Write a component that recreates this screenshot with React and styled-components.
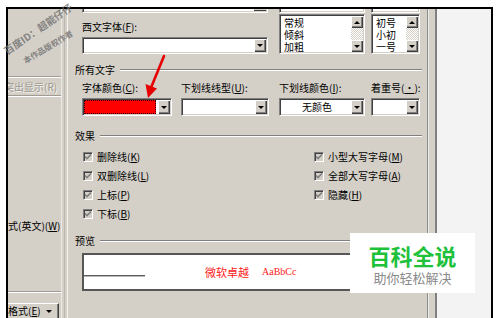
import React from 'react';
import styled, { createGlobalStyle } from 'styled-components';

const FONT = `"Noto Sans CJK SC", "Noto Sans", "Liberation Sans", sans-serif`;

const GlobalStyle = createGlobalStyle`
  html, body { margin: 0; padding: 0; background: #ffffff; }
  body { font-family: ${FONT}; }
  * { box-sizing: border-box; }
`;

const Page = styled.div`
  position: relative;
  width: 500px;
  height: 318px;
  overflow: hidden;
  background: #fff;
  padding: 7px 7px 0 6px;
  font-family: ${FONT};
  font-size: 10px;
  line-height: 12px;
  color: #000;
`;

const Frame = styled.div`
  display: flex;
  height: 100%;
  border: 2px solid #000;
  border-bottom: none;
  background: #d4d0c8;
`;

/* ---------- left background window ---------- */
const LeftPanel = styled.div`
  width: 53px;
  flex: none;
  display: flex;
  flex-direction: column;
  overflow: hidden;
`;

const Rule = styled.div`
  height: 2px;
  flex: none;
  border-top: 1px solid #a09c94;
  border-bottom: 1px solid #fff;
  margin-top: ${(p) => p.$mt || 0}px;
`;

const Ghost = styled.div`
  height: 17px;
  line-height: 17px;
  white-space: nowrap;
  color: #9c988f;
  text-shadow: 1px 1px 0 #f4f2ee;
  text-indent: -4px;
`;

const SideText = styled.div`
  margin-top: ${(p) => p.$mt}px;
  height: 12px;
  white-space: nowrap;
`;

const SideButton = styled.div`
  margin-top: 10px;
  height: 18px;
  width: 51px;
  display: flex;
  align-items: center;
  gap: 5px;
  border-top: 1px solid #fff;
  border-right: 1px solid #404040;
  box-shadow: inset -1px 0 0 #808080;
  white-space: nowrap;
`;

const SmallTri = styled.span`
  width: 0;
  height: 0;
  border-left: 3px solid transparent;
  border-right: 3px solid transparent;
  border-top: 3px solid #000;
  border-bottom: none;
  ${(p) => p.$up && `border-top: none; border-bottom: 3px solid #000;`}
`;

const Gutter = styled.div`
  width: 7px;
  flex: none;
  border-left: 1px solid #eceae4;
  border-right: 1px solid #f6f5f2;
  background: linear-gradient(to right, transparent 2px, #bcb8b0 2px, #bcb8b0 3px, transparent 3px);
`;

/* ---------- main dialog ---------- */
const Dialog = styled.div`
  width: 359px;
  flex: none;
  padding: 0 5px 0 7px;
  display: flex;
  flex-direction: column;
`;

const TopRow = styled.div`
  display: flex;
  align-items: flex-start;
  margin-left: 7px;
`;

const Col = styled.div`
  display: flex;
  flex-direction: column;
  width: ${(p) => p.$w}px;
  flex: none;
`;

const Stub = styled.div`
  height: 4px;
  width: ${(p) => p.$w}px;
  background: #fff;
  border-left: 1px solid #808080;
  border-right: 1px solid #fff;
  border-bottom: 1px solid #fff;
  box-shadow: inset 1px 0 0 #404040, inset -1px -1px 0 #d4d0c8;
  display: flex;
  justify-content: flex-end;
`;

const StubBtn = styled.div`
  width: 12px;
  height: 2px;
  margin-right: 1px;
  background: #d4d0c8;
  border-bottom: 1px solid #404040;
`;

const Label = styled.div`
  margin-top: ${(p) => p.$mt || 0}px;
  height: 12px;
  white-space: nowrap;
`;

const Acc = styled.span`
  text-decoration: underline;
  text-underline-offset: 1px;
`;

const Field = styled.div`
  width: ${(p) => p.$w}px;
  height: ${(p) => p.$h}px;
  margin-top: ${(p) => p.$mt || 0}px;
  background: #fff;
  border-top: 1px solid #808080;
  border-left: 1px solid #808080;
  border-right: 1px solid #fff;
  border-bottom: 1px solid #fff;
  box-shadow: inset 1px 1px 0 #404040, inset -1px -1px 0 #d4d0c8;
  padding: 1px;
  display: flex;
  align-items: stretch;
`;

const FieldText = styled.div`
  flex: 1;
  display: flex;
  align-items: center;
  justify-content: ${(p) => (p.$center ? 'center' : 'flex-start')};
  white-space: nowrap;
  padding-left: 2px;
`;

const ColorCell = styled.div`
  flex: 1;
  margin: 0 2px 0 0;
  background: #ff0000;
  outline: 1px dotted #3a0000;
  outline-offset: -1px;
`;

const RaisedBtn = styled.div`
  width: 12px;
  flex: none;
  background: #d4d0c8;
  box-shadow: inset 1px 1px 0 #fff, inset -1px -1px 0 #404040, inset -2px -2px 0 #808080;
  display: flex;
  align-items: center;
  justify-content: center;
  height: ${(p) => (p.$h ? `${p.$h}px` : 'auto')};
`;

const ListItems = styled.div`
  flex: 1;
  padding: 1px 0 0 3px;
  display: flex;
  flex-direction: column;
`;

const ListItem = styled.span`
  height: 12px;
  line-height: 12px;
  font-size: 10px;
  white-space: nowrap;
`;

const ScrollCol = styled.div`
  width: 12px;
  flex: none;
  display: flex;
  flex-direction: column;
`;

const Track = styled.div`
  flex: 1;
  background-image: conic-gradient(#fff 25%, #d4d0c8 0 50%, #fff 0 75%, #d4d0c8 0);
  background-size: 2px 2px;
`;

const GroupHead = styled.div`
  display: flex;
  align-items: center;
  height: 12px;
  margin-top: ${(p) => p.$mt}px;
  white-space: nowrap;
`;

const GroupLine = styled.div`
  flex: 1;
  height: 2px;
  margin-left: 5px;
  border-top: 1px solid #808080;
  border-bottom: 1px solid #fff;
`;

const FourCols = styled.div`
  display: grid;
  grid-template-columns: 99px 98px 92px 49px;
  margin-left: 7px;
  margin-top: ${(p) => p.$mt}px;
  align-items: start;
`;

const Effects = styled.div`
  display: grid;
  grid-template-columns: 231px auto;
  grid-template-rows: repeat(4, 12px);
  grid-auto-flow: column;
  row-gap: 7px;
  margin-left: 8px;
  margin-top: 9px;
`;

const CheckRow = styled.label`
  display: flex;
  align-items: center;
  gap: 4px;
  white-space: nowrap;
`;

const Box = styled.span`
  width: 10px;
  height: 10px;
  flex: none;
  background: #d4d0c8;
  border-top: 1px solid #808080;
  border-left: 1px solid #808080;
  border-right: 1px solid #fff;
  border-bottom: 1px solid #fff;
  box-shadow: inset 1px 1px 0 #404040, inset -1px -1px 0 #d4d0c8;
  display: flex;
  align-items: center;
  justify-content: center;
`;

const Preview = styled.div`
  margin: 6px 0 0 7px;
  width: 338px;
  height: 38px;
  border: 2px solid #565656;
  background: #fff;
  display: flex;
  align-items: flex-start;
`;

const SampleLine = styled.div`
  width: 61px;
  height: 2px;
  margin-top: 20px;
  border-top: 1px solid #5c5c5c;
  border-bottom: 1px solid #b8b8b8;
`;

const SampleCJK = styled.div`
  margin: 10px 0 0 60px;
  font-size: 11px;
  line-height: 14px;
  color: #ff2020;
  white-space: nowrap;
`;

const SampleLatin = styled.div`
  margin: 11px 0 0 13px;
  font-family: "Liberation Serif", serif;
  font-size: 10px;
  line-height: 12px;
  color: #ff2020;
  white-space: nowrap;
`;

const Divider = styled.div`
  width: 10px;
  flex: none;
  border-left: 1px solid #8c8c8c;
  border-right: 2px solid #808080;
  box-shadow: inset 1px 0 0 #ecebe6;
`;

const SidePanel = styled.div`
  flex: 1;
  background: #f3f3f3;
`;

/* ---------- overlays ---------- */
const Mark = styled.div`
  position: absolute;
  left: ${(p) => p.$x}px;
  top: ${(p) => p.$y}px;
  transform: translate(-50%, -50%) rotate(${(p) => p.$r}deg);
  font-size: ${(p) => p.$s}px;
  line-height: 1;
  font-weight: 700;
  color: rgba(110, 110, 110, 0.8);
  white-space: nowrap;
`;

const ArrowSvg = styled.svg`
  position: absolute;
  left: 0;
  top: 0;
  pointer-events: none;
`;

const Logo = styled.div`
  position: absolute;
  left: 350px;
  top: 233px;
  width: 125px;
  height: 60px;
  background: #fff;
  display: flex;
  flex-direction: column;
  align-items: center;
  padding-top: 9px;
`;

const LogoTitle = styled.div`
  font-size: 22px;
  line-height: 26px;
  font-weight: 700;
  color: #1ec13a;
`;

const LogoSub = styled.div`
  margin-top: 2px;
  font-size: 13px;
  line-height: 15px;
  color: #8a8a8a;
`;

const Check = () => (
  <svg width="8" height="8" viewBox="0 0 8 8">
    <path d="M1 3.5 L3 5.5 L7 1.5" stroke="#808080" strokeWidth="1.6" fill="none" />
  </svg>
);

const CheckItem = ({ children }) => (
  <CheckRow>
    <Box>
      <Check />
    </Box>
    <span>{children}</span>
  </CheckRow>
);

const ListBox = ({ w, items }) => (
  <Field $w={w} $h={40} $mt={1}>
    <ListItems>
      {items.map((t) => (
        <ListItem key={t}>{t}</ListItem>
      ))}
    </ListItems>
    <ScrollCol>
      <RaisedBtn $h={12}>
        <SmallTri $up />
      </RaisedBtn>
      <Track />
      <RaisedBtn $h={12}>
        <SmallTri />
      </RaisedBtn>
    </ScrollCol>
  </Field>
);

const Drop = ({ w, children, center }) => (
  <Field $w={w} $h={18}>
    <FieldText $center={center}>{children}</FieldText>
    <RaisedBtn>
      <SmallTri />
    </RaisedBtn>
  </Field>
);

export default function App() {
  return (
    <>
      <GlobalStyle />
      <Page>
        <Frame>
          <LeftPanel>
            <Rule $mt={67} />
            <Ghost>突出显示(R)</Ghost>
            <Rule />
            <SideText $mt={123}>
              式(英文)(<Acc>W</Acc>)
            </SideText>
            <Rule $mt={59} />
            <SideButton>
              <span>
                格式(<Acc>E</Acc>)
              </span>
              <SmallTri />
            </SideButton>
          </LeftPanel>
          <Gutter />
          <Dialog>
            <TopRow>
              <Col $w={197}>
                <Stub $w={186}>
                  <StubBtn />
                </Stub>
                <Label $mt={8}>
                  西文字体(<Acc>F</Acc>):
                </Label>
                <Field $w={186} $h={17} $mt={4}>
                  <FieldText />
                  <RaisedBtn>
                    <SmallTri />
                  </RaisedBtn>
                </Field>
              </Col>
              <Col $w={92}>
                <Stub $w={86} />
                <ListBox w={86} items={['常规', '倾斜', '加粗']} />
              </Col>
              <Col $w={49}>
                <Stub $w={49} />
                <ListBox w={49} items={['初号', '小初', '一号']} />
              </Col>
            </TopRow>

            <GroupHead $mt={10}>
              所有文字
              <GroupLine />
            </GroupHead>
            <FourCols $mt={6}>
              <Label>
                字体颜色(<Acc>C</Acc>):
              </Label>
              <Label>
                下划线线型(<Acc>U</Acc>):
              </Label>
              <Label>
                下划线颜色(<Acc>I</Acc>):
              </Label>
              <Label>
                着重号(<Acc>·</Acc>):
              </Label>
            </FourCols>
            <FourCols $mt={4}>
              <Field $w={90} $h={18}>
                <ColorCell />
                <RaisedBtn>
                  <SmallTri />
                </RaisedBtn>
              </Field>
              <Drop w={88} />
              <Drop w={86} center>
                无颜色
              </Drop>
              <Drop w={49} />
            </FourCols>

            <GroupHead $mt={14}>
              效果
              <GroupLine />
            </GroupHead>
            <Effects>
              <CheckItem>
                删除线(<Acc>K</Acc>)
              </CheckItem>
              <CheckItem>
                双删除线(<Acc>L</Acc>)
              </CheckItem>
              <CheckItem>
                上标(<Acc>P</Acc>)
              </CheckItem>
              <CheckItem>
                下标(<Acc>B</Acc>)
              </CheckItem>
              <CheckItem>
                小型大写字母(<Acc>M</Acc>)
              </CheckItem>
              <CheckItem>
                全部大写字母(<Acc>A</Acc>)
              </CheckItem>
              <CheckItem>
                隐藏(<Acc>H</Acc>)
              </CheckItem>
            </Effects>

            <GroupHead $mt={15}>
              预览
              <GroupLine />
            </GroupHead>
            <Preview>
              <SampleLine />
              <SampleCJK>微软卓越</SampleCJK>
              <SampleLatin>AaBbCc</SampleLatin>
            </Preview>
          </Dialog>
          <Divider />
          <SidePanel />
        </Frame>

        <Mark $x={38} $y={29} $r={-35} $s={10}>
          百度ID：超能仔仔
        </Mark>
        <Mark $x={48} $y={47} $r={-31} $s={8}>
          本作品版权作者
        </Mark>

        <ArrowSvg width="500" height="318" viewBox="0 0 500 318">
          <path d="M164 56 L151.5 86.5" stroke="#e60000" strokeWidth="2.6" strokeLinecap="round" fill="none" />
          <path d="M148 98 L145.5 84 L157 88.5 Z" fill="#e60000" />
        </ArrowSvg>

        <Logo>
          <LogoTitle>百科全说</LogoTitle>
          <LogoSub>助你轻松解决</LogoSub>
        </Logo>
      </Page>
    </>
  );
}
